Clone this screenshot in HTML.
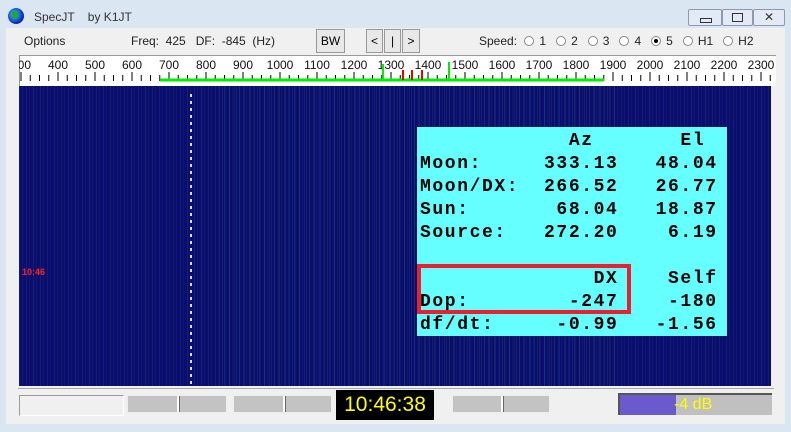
<!DOCTYPE html><html><head><style>
body{margin:0;width:791px;height:432px;background:#dbe6f3;position:relative;overflow:hidden;font-family:"Liberation Sans",sans-serif;}
.a{position:absolute}
.t{font-size:12px;color:#222}
.btn{position:absolute;background:#e8e8e8;border:1px solid #999;box-sizing:border-box;font-size:12px;text-align:center}
.rad{display:inline-block;width:10px;height:10px;border:1px solid #888;border-radius:50%;background:#fff;vertical-align:-1px;margin-right:5px;box-sizing:border-box;position:relative}
.mono{font-family:"Liberation Mono",monospace;font-weight:bold;font-size:18px;letter-spacing:1.6px;color:#000;white-space:pre;line-height:23px}
.sl{position:absolute;background:#c3c3c3;border:1px solid #eee;height:16px;top:395px}
.sl i{position:absolute;top:0;width:2px;height:16px;background:#fff;border-right:1px solid #666}
</style></head><body>
<div class="a" style="left:8px;top:8px;width:16px;height:16px;border-radius:50%;background:radial-gradient(circle at 40% 40%,#3cf 0,#13c 60%,#003 100%)"></div>
<div class="a" style="left:12px;top:11px;width:6px;height:8px;background:#2a2;border-radius:40%"></div>
<div class="a t" style="left:34px;top:10px;color:#333">SpecJT &nbsp;&nbsp; by K1JT</div>
<div class="a" style="left:688px;top:9px;width:32px;height:15px;border:1px solid #8a9ab0;border-radius:2px;background:#e2ebf5"><div class="a" style="left:11px;top:8px;width:10px;height:3px;border:1px solid #333"></div></div>
<div class="a" style="left:722px;top:9px;width:29px;height:15px;border:1px solid #8a9ab0;border-radius:2px;background:#e2ebf5"><div class="a" style="left:9px;top:3px;width:9px;height:7px;border:1px solid #333"></div></div>
<div class="a" style="left:753px;top:9px;width:30px;height:15px;border:1px solid #8a9ab0;border-radius:2px;background:#e2ebf5;text-align:center;font-size:12px;line-height:15px;color:#333">✕</div>
<div class="a" style="left:6px;top:28px;width:779px;height:396px;background:#f0f0f0"></div>
<div class="a t" style="left:24px;top:34px">Options</div>
<div class="a t" style="left:131px;top:34px">Freq:&nbsp; 425 &nbsp;&nbsp;DF:&nbsp; -845&nbsp; (Hz)</div>
<div class="btn" style="left:316px;top:29px;width:29px;height:24px;line-height:22px">BW</div>
<div class="btn" style="left:366px;top:29px;width:17px;height:24px;line-height:22px">&lt;</div>
<div class="btn" style="left:384px;top:29px;width:17px;height:24px;line-height:22px">|</div>
<div class="btn" style="left:402px;top:29px;width:18px;height:24px;line-height:22px">&gt;</div>
<div class="a t" style="left:479px;top:34px;white-space:nowrap">Speed: <span class="rad" style="margin-left:4px"></span>1 &nbsp; <span class="rad"></span>2 &nbsp; <span class="rad"></span>3 &nbsp; <span class="rad"></span>4 &nbsp; <span class="rad"><b style="position:absolute;left:2px;top:2px;width:4px;height:4px;border-radius:50%;background:#000"></b></span>5 &nbsp; <span class="rad"></span>H1 &nbsp; <span class="rad"></span>H2</div>
<svg class="a" style="left:19px;top:55px" width="757" height="31">
<rect x="0" y="0" width="757" height="31" fill="#fff"/><rect x="0" y="0" width="757" height="1" fill="#999"/><rect x="0" y="0" width="1" height="31" fill="#999"/>
<g font-family="Liberation Sans" font-size="12" fill="#111" text-anchor="middle" id="lb"></g>
<g stroke="#000" id="tk"></g>
<line x1="141" y1="25" x2="585" y2="25" stroke="#0e0" stroke-width="3"/>
<line x1="364" y1="9" x2="364" y2="25" stroke="#0e0" stroke-width="2"/>
<line x1="430" y1="7" x2="430" y2="25" stroke="#0e0" stroke-width="2"/>
<g stroke="#e00" stroke-width="2"><line x1="384" y1="15" x2="384" y2="25"/><line x1="393" y1="15" x2="393" y2="25"/><line x1="403" y1="15" x2="403" y2="25"/></g>
</svg>
<div class="a" style="left:19px;top:86px;width:752px;height:300px;background:#0b0d6e;overflow:hidden">
<div class="a" style="left:0;top:0;width:100%;height:100%;background:repeating-linear-gradient(90deg,rgba(40,90,120,.25) 0 1px,transparent 1px 3px,rgba(30,60,140,.2) 3px 4px,transparent 4px 7px)"></div>
<div class="a" style="left:200px;top:0;width:400px;height:100%;background:repeating-linear-gradient(90deg,rgba(40,120,80,.22) 0 1px,transparent 1px 5px)"></div>
<div class="a" style="left:171px;top:8px;width:2px;height:292px;background:repeating-linear-gradient(#ddd 0 3px,transparent 3px 7px)"></div>
<div class="a" style="left:3px;top:181px;font-family:'Liberation Sans';font-weight:bold;font-size:9px;color:#f22">10:46</div>
</div>
<div class="a" style="left:417px;top:127px;width:310px;height:209px;background:#66ffff"></div>
<div class="a mono" style="left:420px;top:130px">            Az       El
Moon:     333.13   48.04
Moon/DX:  266.52   26.77
Sun:       68.04   18.87
Source:   272.20    6.19

              DX    Self
Dop:        -247    -180
df/dt:     -0.99   -1.56</div>
<div class="a" style="left:417px;top:264px;border:4px solid #e82030;width:206px;height:42px"></div>
<div class="a" style="left:18px;top:388px;width:756px;height:1px;background:#aaa"></div>
<div class="a" style="left:19px;top:395px;height:19px;border-top:1px solid #999;border-left:1px solid #999;border-bottom:1px solid #fff;border-right:1px solid #fff;width:103px"></div>
<div class="sl" style="left:127px;width:98px"><i style="left:49px"></i></div>
<div class="sl" style="left:233px;width:97px"><i style="left:49px"></i></div>
<div class="a" style="left:336px;top:390px;width:98px;height:30px;background:#000;color:#ff0;font-size:21px;text-align:center;line-height:30px">10:46:38</div>
<div class="sl" style="left:452px;width:96px"><i style="left:48px"></i></div>
<div class="a" style="left:618px;top:393px;width:152px;height:20px;background:#c0c0c0;border-top:2px solid #555;border-left:2px solid #555"><div class="a" style="left:0;top:0;width:56px;height:20px;background:#6a5acd"></div><div class="a" style="left:54px;top:0;color:#ff0;font-size:16px;line-height:20px">-4 dB</div></div>
<script>
var lb=document.getElementById('lb'),tk=document.getElementById('tk'),s='';
for(var f=300;f<=2300;f+=100){var x=39+(f-400)*0.37;s+='<text x="'+x+'" y="14">'+f+'</text>';}
lb.innerHTML=s;s='';
for(var f=200;f<=2350;f+=25){var x=39+(f-400)*0.37;if(x<0||x>757)continue;var big=f%100==0;s+='<line x1="'+x+'" y1="'+(big?17:20)+'" x2="'+x+'" y2="26"/>';}
tk.innerHTML=s;
</script>
</body></html>
